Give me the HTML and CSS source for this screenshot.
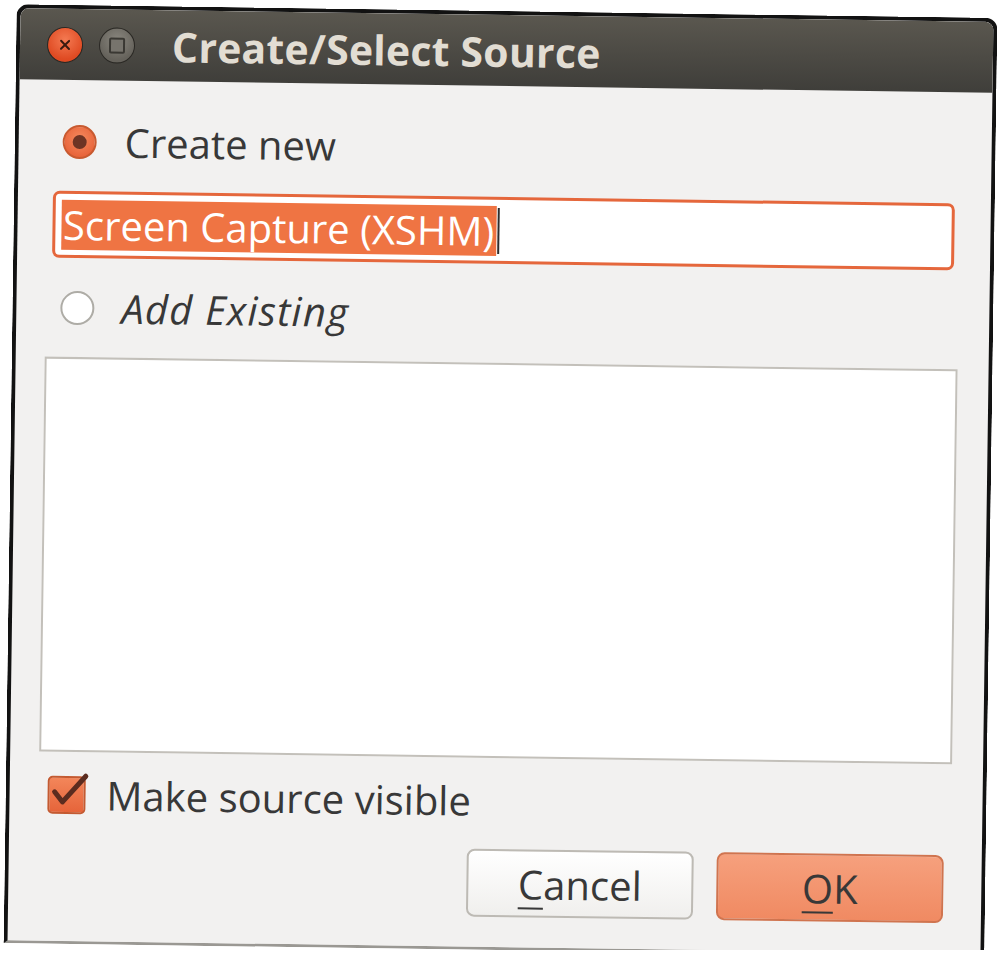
FILE: index.html
```html
<!DOCTYPE html>
<html>
<head>
<meta charset="utf-8">
<link rel="stylesheet" href="styles.css">
</head>
<body>
<div class="window">
  <div class="titlebar">
    <span class="wbtn close">
      <svg width="14" height="14" viewBox="0 0 14 14"><path d="M3 3 L11 11 M11 3 L3 11" stroke="#3a1a10" stroke-width="2" stroke-linecap="round"/></svg>
    </span>
    <span class="wbtn minbtn"><span class="sq"></span></span>
    <span class="title">Create/Select Source</span>
  </div>
  <div class="content">
    <div class="row radio-row first">
      <span class="radio on"><span class="dot"></span></span>
      <span class="label">Create new</span>
    </div>
    <div class="field">
      <span class="sel">Screen Capture (XSHM)</span><span class="caret"></span>
    </div>
    <div class="row radio-row second">
      <span class="radio"></span>
      <span class="label italic">Add Existing</span>
    </div>
    <div class="list"></div>
    <div class="row check-row">
      <span class="check">
        <svg width="44" height="42" viewBox="0 0 44 42"><path d="M9 20 L17 30 L40 4" fill="none" stroke="#5b2c1f" stroke-width="5" stroke-linecap="round" stroke-linejoin="round"/></svg>
      </span>
      <span class="label">Make source visible</span>
    </div>
    <div class="buttons">
      <button class="btn cancel"><u>C</u>ancel</button>
      <button class="btn ok"><u>O</u>K</button>
    </div>
  </div>
</div>
</body>
</html>
```
FILE: styles.css
```css
html, body {
  margin: 0;
  background: #ffffff;
}
body {
  padding: 11px 0 0 10px;
  font-family: "Open Sans", "Noto Sans", sans-serif;
}
.window {
  width: 981px;
  height: 939px;
  box-sizing: border-box;
  background: #f2f1f0;
  border: 4px solid #121212;
  border-bottom: 3px solid #9a9893;
  border-radius: 12px 12px 0 0;
  display: flex;
  flex-direction: column;
  transform: rotate(0.8deg);
  transform-origin: 50% 50%;
  overflow: hidden;
}
.titlebar {
  height: 71px;
  flex: none;
  display: flex;
  align-items: center;
  padding-left: 27px;
  background: linear-gradient(#5a574f, #3f3e3a);
  border-radius: 8px 8px 0 0;
}
.wbtn {
  width: 36px;
  height: 36px;
  border-radius: 50%;
  display: flex;
  align-items: center;
  justify-content: center;
  box-sizing: border-box;
}
.close {
  background: radial-gradient(circle at 50% 35%, #f47a52, #df4a22 70%);
  border: 1px solid #2a2824;
}
.minbtn {
  margin-left: 16px;
  background: radial-gradient(circle at 50% 35%, #8a877f, #65625b 70%);
  border: 1px solid #2a2824;
}
.sq {
  width: 12px;
  height: 12px;
  border: 2px solid #3a3833;
  border-radius: 2px;
  background: #77746d;
}
.title {
  margin-left: 37px;
  color: #e2ddd3;
  font-weight: 700;
  font-size: 41px;
  letter-spacing: 0.2px;
}
.content {
  flex: 1;
  display: flex;
  flex-direction: column;
  padding: 0 31px 0 29px;
}
.row {
  display: flex;
  align-items: center;
}
.label {
  color: #383838;
  font-size: 40px;
  line-height: 44px;
}
.italic {
  font-style: italic;
  letter-spacing: 1.2px;
}
.radio-row.first { margin-top: 45px; margin-left: 15px; height: 34px; }
.radio-row.second { margin-top: 33px; margin-left: 15px; height: 34px; }
.radio {
  width: 34px;
  height: 34px;
  flex: none;
  border-radius: 50%;
  box-sizing: border-box;
  border: 2px solid #aeaca6;
  background: #ffffff;
  display: flex;
  align-items: center;
  justify-content: center;
}
.radio.on {
  border: 2px solid #c85a30;
  background: radial-gradient(circle at 50% 40%, #f58a5f, #e8643a 75%);
}
.dot {
  width: 14px;
  height: 14px;
  border-radius: 50%;
  background: #6e3424;
}
.radio-row.first .label { margin-left: 28px; }
.radio-row.second .label { margin-left: 27px; }
.field {
  margin: 32px 5px 0 5.5px;
  height: 67px;
  box-sizing: border-box;
  border: 3px solid #e5673c;
  border-radius: 7px;
  background: #ffffff;
  display: flex;
  align-items: center;
  padding-left: 6px;
}
.sel {
  background: #ef7443;
  color: #ffffff;
  font-size: 40px;
  line-height: 50px;
  height: 50px;
  padding: 0 2px;
}
.caret {
  width: 2px;
  height: 46px;
  background: #2e2e2e;
  margin-left: 1px;
}
.list {
  margin-top: 32px;
  height: 395px;
  flex: none;
  box-sizing: border-box;
  background: #ffffff;
  border: 2px solid #c3c0ba;
}
.check-row {
  margin-top: 24px;
  margin-left: 9px;
  height: 38px;
}
.check {
  width: 38px;
  height: 38px;
  flex: none;
  box-sizing: border-box;
  border-radius: 5px;
  border: 2px solid #c45a31;
  background: linear-gradient(#f3865a, #e6643a);
  position: relative;
}
.check svg {
  position: absolute;
  left: -4px;
  top: -6px;
}
.check-row .label { margin-left: 21px; }
.buttons {
  margin-top: 29px;
  padding-right: 7px;
  display: flex;
  justify-content: flex-end;
  gap: 23px;
}
.btn {
  width: 227px;
  height: 68px;
  border-radius: 8px;
  font-family: "Open Sans", "Noto Sans", sans-serif;
  font-size: 40px;
  color: #383838;
  padding: 0;
  display: flex;
  align-items: center;
  justify-content: center;
}
.btn u {
  text-decoration-thickness: 2px;
  text-underline-offset: 8px;
}
.cancel {
  background: linear-gradient(#ffffff, #f0efed);
  border: 2px solid #bdbab4;
}
.ok {
  background: linear-gradient(#f6a07d, #f08a62);
  border: 2px solid #d0744f;
}
```
